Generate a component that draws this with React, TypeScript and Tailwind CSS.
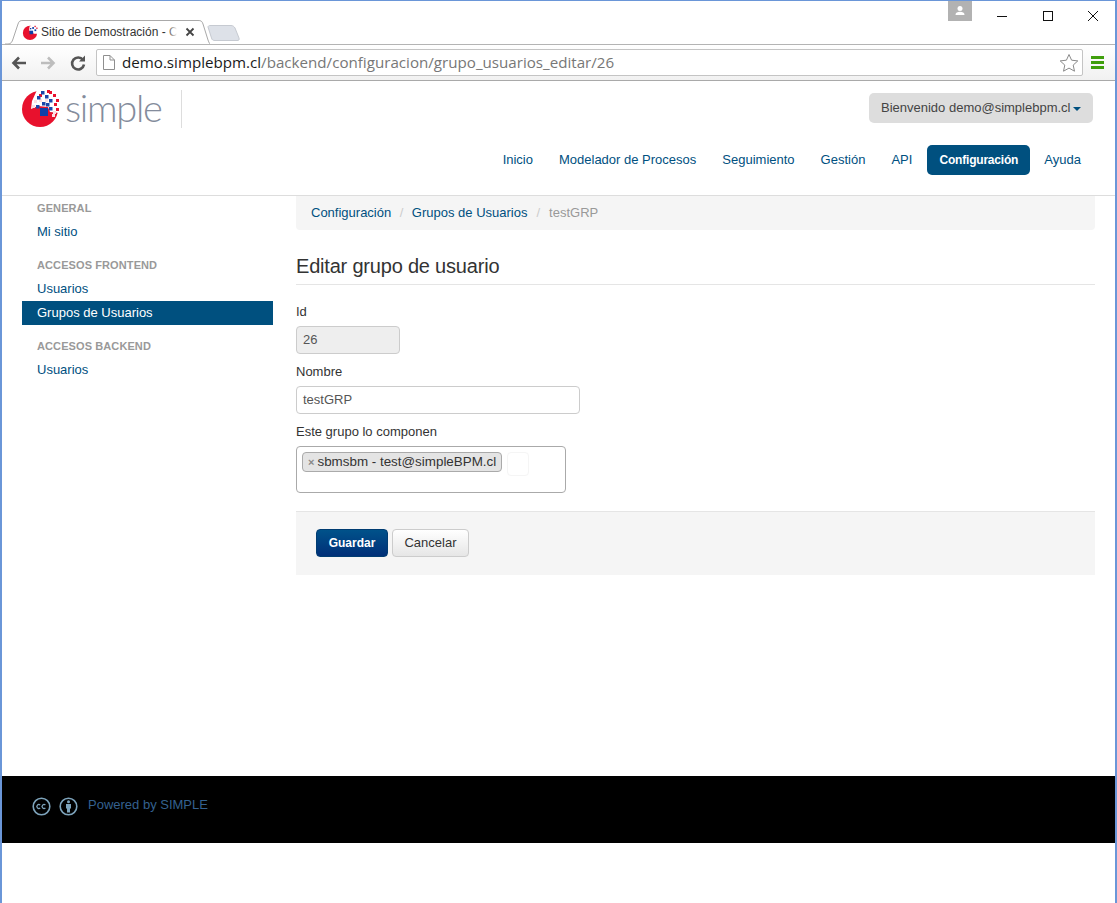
import { Fragment } from 'react'

function Favicon({ size = 16 }: { size?: number }) {
  return (
    <svg width={size} height={size} viewBox="0 0 36 36" className="shrink-0">
      <circle cx="18" cy="20" r="16" fill="#e8112d" />
      <path d="M17 5 L36 3 L36 22 L26 22 L24 17 L16 15 Z" fill="#fff" />
      <rect x="17" y="15" width="8" height="8" fill="#0f3fa8" />
      <rect x="23" y="7" width="4" height="4" fill="#0f3fa8" />
      <rect x="28" y="12" width="4" height="4" fill="#0f3fa8" />
      <rect x="18" y="9" width="3" height="3" fill="#0f3fa8" />
      <rect x="28" y="4" width="3" height="3" fill="#e8112d" />
      <rect x="32" y="8" width="3" height="3" fill="#e8112d" />
    </svg>
  )
}

function Logo() {
  const blue = [[19, 1], [23, 5], [15, 6], [27, 9], [20, 12], [14, 15], [27, 17], [24, 13]]
  const red = [[27, 1], [31, 4], [34, 9], [32, 13], [34, 18], [17, 4], [25, 0]]
  const pale = [[12, 10], [17, 9], [10, 15], [23, 9], [31, 21], [30, 24]]
  return (
    <svg width="38" height="37" viewBox="0 0 38 37" className="shrink-0">
      <circle cx="18" cy="19" r="18" fill="#e8112d" />
      <path d="M15 0 H38 V23 L28 22 L26 17 L16 16 L9 19 L10 11 Z" fill="#fff" />
      {pale.map(([x, y], i) => (
        <rect key={i} x={x} y={y} width="3" height="3" fill="#fbdfe3" />
      ))}
      {red.map(([x, y], i) => (
        <rect key={i} x={x} y={y} width="3" height="3" fill="#e8112d" />
      ))}
      {blue.map(([x, y], i) => (
        <rect key={i} x={x} y={y} width="3.5" height="3.5" fill="#1b46a8" />
      ))}
      <rect x="18" y="18" width="8" height="8" fill="#0f3fa8" />
    </svg>
  )
}

function ChromeBar() {
  return (
    <div className="h-[80px] flex flex-col shrink-0">
      {/* title strip */}
      <div className="h-[43px] flex items-end pl-[3px] relative">
        <div className="relative w-[205px] h-[24px] flex items-center pl-[17px] pr-[20px]">
          <svg className="absolute inset-0" width="205" height="25" viewBox="0 0 205 25">
            <path d="M0 24 H3 C6 24 7 22 8 19 L13 4 C14 1 15 0.5 18 0.5 H193 C196 0.5 197 1 198 4 L203 20 C204 23 205 24 205 24" fill="#fff" stroke="#a9a9a9" />
          </svg>
          <div className="relative flex items-center gap-[3px] w-full">
            <Favicon />
            <span className="relative w-[136px] shrink-0 text-[12px] text-[#333] whitespace-nowrap overflow-hidden">
              Sitio de Demostración - C
              <span className="absolute inset-y-0 right-0 w-[10px] bg-[linear-gradient(to_right,rgba(255,255,255,0),#ffffff)]" />
            </span>
            <svg width="10" height="10" viewBox="0 0 10 10" className="ml-[5px] shrink-0">
              <path d="M1.5 1.5 L8.5 8.5 M8.5 1.5 L1.5 8.5" stroke="#444" strokeWidth="1.8" />
            </svg>
          </div>
        </div>
        <svg width="34" height="17" viewBox="0 0 34 17" className="-ml-[3px] mb-[2px]">
          <path d="M1 2 C1 1 2 0.5 3 0.5 H24 C26 0.5 27 1.5 28 3 L32 13 C32.5 15 32 15.5 30 15.5 H8 C6 15.5 5 15 4.5 13 Z" fill="#dde1e8" stroke="#c6cad1" />
        </svg>
        <div className="absolute top-0 -right-[1px] h-[43px] flex items-start">
          <div className="w-[24px] h-[20px] bg-[#b2b2b2] flex items-center justify-center mr-[7px]">
            <svg width="12" height="12" viewBox="0 0 12 12">
              <circle cx="6" cy="3.6" r="2.5" fill="#fff" />
              <path d="M1.5 10 C1.5 7.4 3.5 6.8 6 6.8 C8.5 6.8 10.5 7.4 10.5 10 Z" fill="#fff" />
            </svg>
          </div>
          <div className="w-[46px] h-[30px] flex items-center justify-center">
            <svg width="12" height="12" viewBox="0 0 12 12"><path d="M1 6.5 H11" stroke="#111" /></svg>
          </div>
          <div className="w-[45px] h-[30px] flex items-center justify-center">
            <svg width="12" height="12" viewBox="0 0 12 12"><rect x="1.5" y="1.5" width="9" height="9" fill="none" stroke="#111" /></svg>
          </div>
          <div className="w-[46px] h-[30px] flex items-center justify-center">
            <svg width="12" height="12" viewBox="0 0 12 12"><path d="M1 1 L11 11 M11 1 L1 11" stroke="#111" /></svg>
          </div>
        </div>
      </div>
      {/* toolbar */}
      <div className="h-[37px] border-y border-[#a9a9a9] border-t-[#b4b4b4] bg-[linear-gradient(#ffffff,#f1f1f1)] flex items-center pl-[8px] pr-[10px]">
        <svg width="18" height="18" viewBox="0 0 18 18" className="shrink-0">
          <path d="M16 9 H5 M9 3.5 L3.5 9 L9 14.5" fill="none" stroke="#555" strokeWidth="2.6" />
        </svg>
        <svg width="18" height="18" viewBox="0 0 18 18" className="shrink-0 ml-[11px]">
          <path d="M2 9 H13 M9 3.5 L14.5 9 L9 14.5" fill="none" stroke="#bdbdbd" strokeWidth="2.6" />
        </svg>
        <svg width="18" height="18" viewBox="0 0 18 18" className="shrink-0 ml-[12px]">
          <path d="M14 6 A6 6 0 1 0 15 10.5" fill="none" stroke="#555" strokeWidth="2.6" />
          <path d="M10 7.5 H16 V1.5 Z" fill="#555" />
        </svg>
        <div className="ml-[9px] w-[987px] h-[27px] border border-[#c4c4c4] bg-white rounded-[2px] flex items-center pl-[6px] pr-[3px]">
          <svg width="12" height="15" viewBox="0 0 12 15" className="shrink-0">
            <path d="M0.5 0.5 H7 L11.5 5 V14.5 H0.5 Z M7 0.5 V5 H11.5" fill="#fff" stroke="#8f8f8f" />
          </svg>
          <span className="ml-[7px] text-[15.15px] leading-none whitespace-nowrap text-[#777] font-['Open_Sans','Liberation_Sans',sans-serif]">
            <span className="text-[#1a1a1a]">demo.simplebpm.cl</span>/backend/configuracion/grupo_usuarios_editar/26
          </span>
          <svg width="20" height="20" viewBox="0 0 20 20" className="ml-auto shrink-0">
            <path d="M10 1.5 L12.6 7.2 L18.8 7.9 L14.2 12.1 L15.5 18.2 L10 15.1 L4.5 18.2 L5.8 12.1 L1.2 7.9 L7.4 7.2 Z" fill="#fff" stroke="#8a8a8a" />
          </svg>
        </div>
        <div className="ml-[8px] flex flex-col gap-[2px] w-[13px] shrink-0">
          <div className="h-[3px] bg-[#3f9e0c]" />
          <div className="h-[3px] bg-[#3f9e0c]" />
          <div className="h-[3px] bg-[#3f9e0c]" />
        </div>
      </div>
    </div>
  )
}

function Header() {
  const nav = ['Inicio', 'Modelador de Procesos', 'Seguimiento', 'Gestión', 'API', 'Configuración', 'Ayuda']
  return (
    <header className="h-[115px] border-b border-[#dddddd] pl-[20px] pr-[22px] shrink-0">
      <div className="flex items-start justify-between pt-[9px]">
        <div className="flex items-start">
          <Logo />
          <span className="ml-[5px] -mt-[5px] h-[38px] text-[38px] leading-[44px] font-light text-[#848c9c] tracking-[-1.3px] font-['Lato','Open_Sans',sans-serif]">simple</span>
          <div className="ml-[19px] w-px h-[38px] bg-[#dddddd]" />
        </div>
        <div className="mt-[3px] h-[30px] w-[224px] rounded-[5px] bg-[#dddddd] flex items-center pl-[12px] text-[13px] text-[#444] whitespace-nowrap">
          Bienvenido demo@simplebpm.cl
          <span className="ml-[2px] mt-[1px] border-x-[4px] border-x-transparent border-t-[4px] border-t-[#00507f]" />
        </div>
      </div>
      <nav className="flex justify-end items-center mt-[17px] -mr-[1px] text-[13px] text-[#00507f]">
        {nav.map(item =>
          item === 'Configuración' ? (
            <span key={item} className="h-[30px] w-[103px] ml-[2px] mr-[1px] rounded-[5px] bg-[#00507f] text-white text-[12px] tracking-[-0.2px] font-bold flex items-center justify-center">
              {item}
            </span>
          ) : (
            <span key={item} className="px-[13px] h-[30px] flex items-center">
              {item}
            </span>
          )
        )}
      </nav>
    </header>
  )
}

const sideGroups = [
  { title: 'GENERAL', items: ['Mi sitio'] },
  { title: 'ACCESOS FRONTEND', items: ['Usuarios', 'Grupos de Usuarios'] },
  { title: 'ACCESOS BACKEND', items: ['Usuarios'] },
]

function Sidebar() {
  return (
    <aside className="w-[251px] shrink-0">
      {sideGroups.map(group => (
        <div key={group.title} className="mb-[9px]">
          <div className="h-[24px] pl-[15px] flex items-center text-[11px] font-bold text-[#999999] tracking-[0.1px]">{group.title}</div>
          {group.items.map(item => (
            <Fragment key={item}>
              <div
                className={
                  item === 'Grupos de Usuarios'
                    ? 'h-[24px] pl-[15px] flex items-center text-[13px] bg-[#00507f] text-white'
                    : 'h-[24px] pl-[15px] flex items-center text-[13px] text-[#00507f]'
                }
              >
                {item}
              </div>
            </Fragment>
          ))}
        </div>
      ))}
    </aside>
  )
}

function MainForm() {
  return (
    <main className="ml-[23px] w-[799px]">
      <div className="h-[34px] rounded-b-[4px] bg-[#f5f5f5] flex items-center pl-[15px] text-[13px] text-[#00507f]">
        <span>Configuración</span>
        <span className="px-[8.5px] text-[#cccccc]">/</span>
        <span>Grupos de Usuarios</span>
        <span className="px-[9px] text-[#cccccc]">/</span>
        <span className="text-[#999999]">testGRP</span>
      </div>
      <h1 className="mt-[21px] h-[34px] border-b border-[#e5e5e5] text-[20px] leading-[30px] tracking-[-0.2px] text-[#333]">Editar grupo de usuario</h1>
      <label className="block mt-[17px] text-[13px] leading-[20px] text-[#333]">Id</label>
      <div className="mt-[4px] w-[104px] h-[28px] rounded-[4px] border border-[#cccccc] bg-[#eeeeee] flex items-center pl-[6px] text-[13px] text-[#555]">26</div>
      <label className="block mt-[8px] text-[13px] leading-[20px] text-[#333]">Nombre</label>
      <div className="mt-[4px] w-[284px] h-[28px] rounded-[4px] border border-[#cccccc] bg-white flex items-center pl-[6px] text-[13px] text-[#555]">testGRP</div>
      <label className="block mt-[8px] text-[13px] leading-[20px] text-[#333]">Este grupo lo componen</label>
      <div className="mt-[4px] w-[270px] h-[47px] rounded-[4px] border border-[#aaaaaa] bg-white pl-[5px] pt-[5px] flex items-start">
        <div className="h-[20px] w-[200px] rounded-[4px] border border-[#aaaaaa] bg-[#e4e4e4] flex items-center pl-[5px] text-[13.4px] text-[#333] whitespace-nowrap">
          <span className="text-[11px] font-bold text-[#888] mr-[3px]">×</span>sbmsbm - test@simpleBPM.cl
        </div>
        <div className="ml-[5px] w-[22px] h-[24px] rounded-[4px] border border-[#f5f5f5]" />
      </div>
      <div className="mt-[18px] h-[64px] border-t border-[#e5e5e5] bg-[#f5f5f5] flex items-start pt-[17px] pl-[20px] text-[13px]">
        <button className="w-[72px] h-[28px] rounded-[4px] border border-[#003c72] bg-[linear-gradient(#00528a,#002f78)] text-white text-[12px] font-bold">Guardar</button>
        <button className="ml-[4px] w-[77px] h-[28px] rounded-[4px] border border-[#cccccc] bg-[linear-gradient(#ffffff,#e6e6e6)] text-[#333]">Cancelar</button>
      </div>
    </main>
  )
}

function Footer() {
  return (
    <footer className="mt-auto h-[67px] bg-black flex items-start pl-[30px] pt-[20px] shrink-0">
      <svg width="19" height="19" viewBox="0 0 19 19" className="mt-[1px]">
        <circle cx="9.5" cy="9.5" r="8.3" fill="none" stroke="#7da3bb" strokeWidth="1.6" />
        <path d="M8.2 8 A2 2 0 1 0 8.2 11 M13.4 8 A2 2 0 1 0 13.4 11" fill="none" stroke="#7da3bb" strokeWidth="1.3" />
      </svg>
      <svg width="19" height="19" viewBox="0 0 19 19" className="ml-[8px] mt-[1px]">
        <circle cx="9.5" cy="9.5" r="8.3" fill="none" stroke="#7da3bb" strokeWidth="1.6" />
        <circle cx="9.5" cy="4.8" r="1.5" fill="#7da3bb" />
        <path d="M7 7 H12 V11.5 H11 V15.5 H8 V11.5 H7 Z" fill="#7da3bb" />
      </svg>
      <span className="ml-[10px] text-[13px] leading-[17px] text-[#34618f]">Powered by SIMPLE</span>
    </footer>
  )
}

export default function App() {
  return (
    <div className="w-[1117px] h-[903px] bg-white overflow-hidden border-t border-x-2 border-[#6a96d8] flex flex-col font-['Liberation_Sans',Arial,sans-serif]">
      <ChromeBar />
      <Header />
      <div className="flex pl-[20px] h-[580px] shrink-0">
        <Sidebar />
        <MainForm />
      </div>
      <Footer />
      <div className="h-[60px] shrink-0" />
    </div>
  )
}
